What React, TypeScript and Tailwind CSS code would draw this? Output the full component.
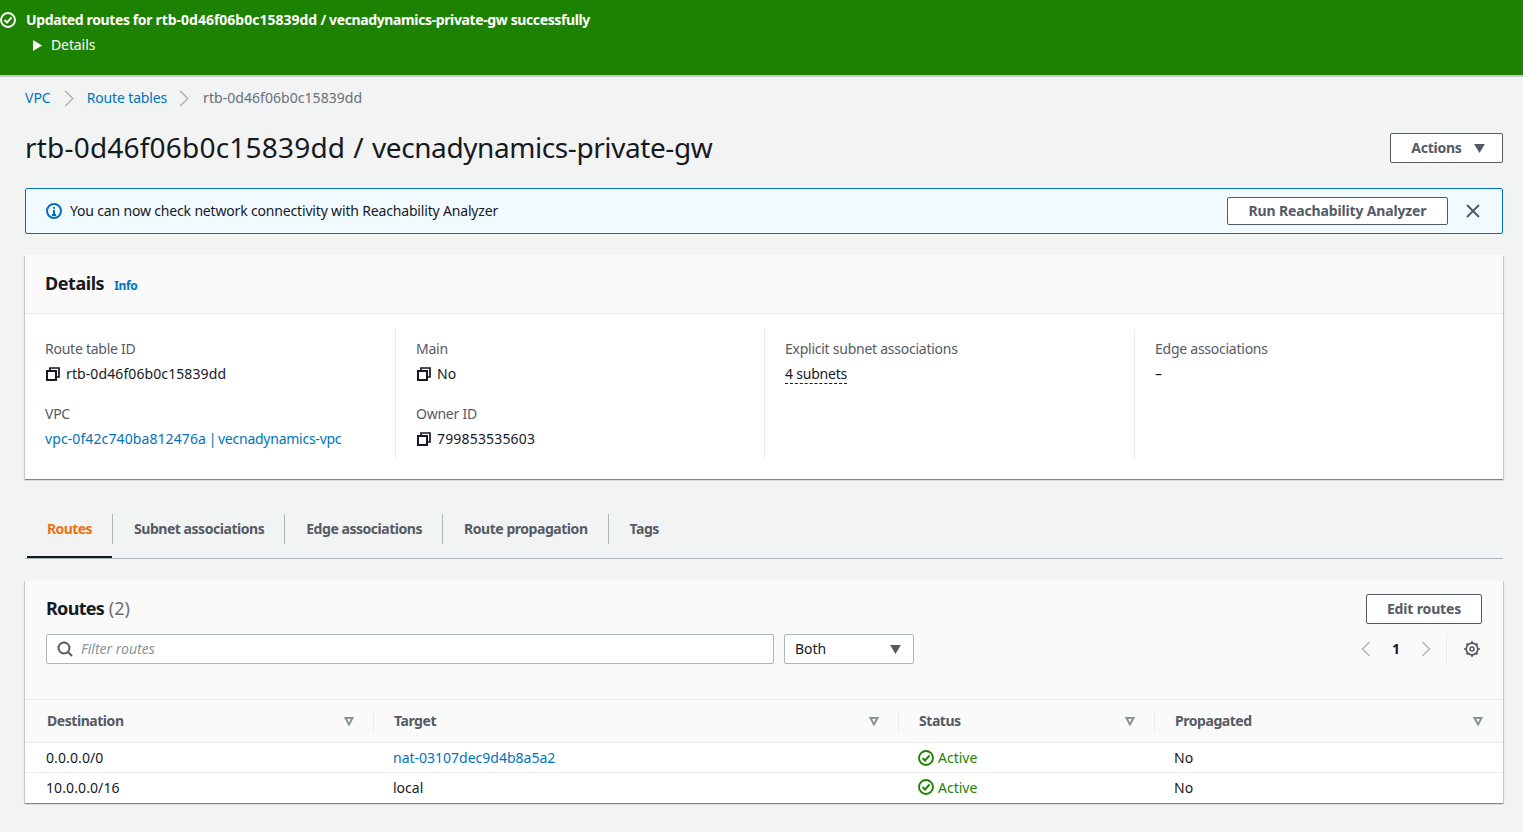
// --- Small drawn icons ---
const CheckCircle = ({ className }: { className: string }) => (
  <svg viewBox="0 0 16 16" className={className} fill="none" stroke="currentColor" strokeWidth="1.9">
    <circle cx="8" cy="8" r="7" />
    <path d="M4.5 8 7 10.5 11.5 5.5" />
  </svg>
);

const CopyIcon = () => (
  <svg viewBox="0 0 14 14" className="ml-[1px] h-[14px] w-[14px] shrink-0" fill="none" stroke="#16191f" strokeWidth="2">
    <rect x="1" y="4" width="9" height="9" />
    <path d="M4 3V1h9v9h-2" strokeWidth="1.7" />
  </svg>
);

const Caret = ({ className }: { className: string }) => (
  <svg viewBox="0 0 12 10" className={className} fill="currentColor">
    <path d="M0 0h12L6 10z" />
  </svg>
);

const SortCaret = () => (
  <svg viewBox="0 0 10 9" className="h-[9px] w-[10px] text-[#879596]" fill="none" stroke="currentColor" strokeWidth="2">
    <path d="M1.5 1h7L5 7.5z" />
  </svg>
);

const Chevron = ({ left, className }: { left?: boolean; className: string }) => (
  <svg viewBox="0 0 10 18" className={className} fill="none" stroke="currentColor" strokeWidth="1.6">
    <path d={left ? "M9 1 1 9l8 8" : "M1 1l8 8-8 8"} />
  </svg>
);

const Gear = () => (
  <svg viewBox="0 0 16 16" className="h-[16px] w-[16px] text-[#545b64]" fill="none" stroke="currentColor" strokeWidth="1.7">
    <circle cx="8" cy="8" r="5.8" />
    <circle cx="8" cy="8" r="2" strokeWidth="1.6" />
    <path d="M8 0.3v1.7M8 14v1.7M0.3 8H2M14 8h1.7M2.6 2.6l1.1 1.1M12.3 12.3l1.1 1.1M2.6 13.4l1.1-1.1M12.3 3.7l1.1-1.1" strokeWidth="2" />
  </svg>
);

const Button = ({ children, className }: { children: React.ReactNode; className: string }) => (
  <button
    type="button"
    className={`flex items-center justify-center rounded-[2px] border border-[#545b64] bg-white pb-[2px] text-[14px] font-bold tracking-[-0.15px] text-[#545b64] ${className}`}
  >
    {children}
  </button>
);

const Field = ({ label, children }: { label: string; children: React.ReactNode }) => (
  <div className="flex h-[45px] flex-col justify-between">
    <div className="leading-[20px] tracking-[-0.25px] text-[#545b64]">{label}</div>
    <div className="flex items-center gap-[6px] leading-[20px]">{children}</div>
  </div>
);

const tabs = ["Subnet associations", "Edge associations", "Route propagation", "Tags"];

const columns = [
  { name: "Destination", width: "w-[349px] pl-[22px] pr-[19px]" },
  { name: "Target", width: "w-[525px] pl-[20px] pr-[19px]" },
  { name: "Status", width: "w-[256px] pl-[20px] pr-[19px]" },
  { name: "Propagated", width: "flex-1 pl-[20px] pr-[20px]" },
];

const routes = [
  { destination: "0.0.0.0/0", target: "nat-03107dec9d4b8a5a2", link: true },
  { destination: "10.0.0.0/16", target: "local", link: false },
];

const App = () => {
  return (
    <div className="min-h-[832px] bg-[#f2f3f3] font-['Noto_Sans',sans-serif] text-[14px] text-[#16191f]">
      {/* flash banner */}
      <div className="h-[77px] border-b-2 border-[#c4c8c8] bg-[#1d8102] text-white">
        <div className="flex h-[40px] items-center">
          <CheckCircle className="h-[16px] w-[16px]" />
          <span className="ml-[10px] pb-[2px] font-bold whitespace-pre">
            <span className="tracking-[-0.38px]">Updated routes for </span>
            <span>rtb-0d46f06b0c15839dd</span>
            <span className="tracking-[-0.38px]"> / vecnadynamics-private-gw successfully</span>
          </span>
        </div>
        <div className="flex h-[10px] items-center">
          <svg viewBox="0 0 9 11" className="ml-[33px] h-[11px] w-[9px]" fill="currentColor">
            <path d="M0 0l9 5.5L0 11z" />
          </svg>
          <span className="ml-[9px] pb-[2px] tracking-[-0.1px]">Details</span>
        </div>
      </div>

      <div className="pr-[20px] pl-[25px]">
        {/* breadcrumb */}
        <div className="flex h-[42px] items-center">
          <span className="pb-[2px] text-[#0073bb]">VPC</span>
          <Chevron className="mx-[13px] h-[17px] w-[10px] text-[#aab7b8]" />
          <span className="pb-[2px] tracking-[-0.15px] text-[#0073bb]">Route tables</span>
          <Chevron className="mr-[14px] ml-[12px] h-[17px] w-[10px] text-[#aab7b8]" />
          <span className="pb-[2px] tracking-[0.05px] text-[#687078]">rtb-0d46f06b0c15839dd</span>
        </div>

        {/* title row */}
        <div className="mt-[14px] flex h-[30px] items-center justify-between">
          <h1 className="pb-[3px] text-[28px] leading-[36px] font-normal whitespace-pre">
            <span className="tracking-[0.2px]">rtb-0d46f06b0c15839dd</span>
            <span className="tracking-[0.6px]"> / </span>
            <span className="tracking-[-0.42px]">vecnadynamics-private-gw</span>
          </h1>
          <Button className="h-[30px] w-[113px] gap-[12px] pl-[3px] tracking-[-0.25px]">
            Actions
            <Caret className="mt-[2px] h-[9px] w-[11px]" />
          </Button>
        </div>

        {/* info alert */}
        <div className="mt-[25px] flex h-[46px] items-center rounded-[2px] border border-[#0073bb] bg-[#f1faff] pr-[19px] pl-[20px]">
          <svg viewBox="0 0 16 16" className="h-[16px] w-[16px] text-[#0073bb]" fill="none" stroke="currentColor" strokeWidth="2">
            <circle cx="8" cy="8" r="7" />
            <path d="M8 7v5M6 12h4M8 4v1.8" />
          </svg>
          <span className="ml-[8px] flex-1 pb-[2px] tracking-[-0.17px]">You can now check network connectivity with Reachability Analyzer</span>
          <Button className="h-[28px] w-[221px]">Run Reachability Analyzer</Button>
          <svg viewBox="0 0 14 14" className="mr-[3px] ml-[18px] h-[14px] w-[14px] text-[#545b64]" fill="none" stroke="currentColor" strokeWidth="2">
            <path d="M1 1l12 12M13 1 1 13" />
          </svg>
        </div>

        {/* details card */}
        <div className="mt-[21px] h-[224px] bg-white shadow-[0_1px_1px_0_rgba(0,28,36,0.3),1px_1px_1px_0_rgba(0,28,36,0.15),-1px_1px_1px_0_rgba(0,28,36,0.15)]">
          <div className="flex h-[59px] items-center border-b border-[#eaeded] bg-[#fafafa] pl-[20px]">
            <span className="pb-[2px] text-[18px] font-bold tracking-[-0.45px]">Details</span>
            <span className="mt-[3px] ml-[10px] text-[12px] font-bold tracking-[-0.3px] text-[#0073bb]">Info</span>
          </div>
          <div className="flex pt-[15px]">
            <div className="flex h-[130px] w-[371px] flex-col justify-between border-r border-[#eaeded] py-[10px] pl-[20px]">
              <Field label="Route table ID">
                <CopyIcon />
                <span className="tracking-[0.1px]">rtb-0d46f06b0c15839dd</span>
              </Field>
              <Field label="VPC">
                <span className="whitespace-pre text-[#0073bb]">
                  <span className="tracking-[0.1px]">vpc-0f42c740ba812476a</span>
                  <span className="tracking-[-1px]"> | </span>
                  <span className="tracking-[-0.25px]">vecnadynamics-vpc</span>
                </span>
              </Field>
            </div>
            <div className="flex h-[130px] w-[369px] flex-col justify-between border-r border-[#eaeded] py-[10px] pl-[20px]">
              <Field label="Main">
                <CopyIcon />
                No
              </Field>
              <Field label="Owner ID">
                <CopyIcon />
                <span className="tracking-[0.17px]">799853535603</span>
              </Field>
            </div>
            <div className="h-[130px] w-[370px] border-r border-[#eaeded] py-[10px] pl-[20px]">
              <Field label="Explicit subnet associations">
                <span className="border-b border-dashed border-[#16191f] leading-[19px] tracking-[-0.2px]">4 subnets</span>
              </Field>
            </div>
            <div className="h-[130px] flex-1 py-[10px] pl-[20px]">
              <Field label="Edge associations">–</Field>
            </div>
          </div>
        </div>

        {/* tabs */}
        <div className="mt-[21px] flex h-[59px] items-end border-b border-[#aab7b8] pl-[2px]">
          <div className="flex h-[58px] w-[85px] items-center border-b-2 border-[#16191f] pl-[20px] font-bold tracking-[-0.6px] text-[#ec7211]">
            Routes
          </div>
          {tabs.map((tab) => (
            <div key={tab} className="flex h-[58px] items-center">
              <div className="flex h-[30px] items-center border-l border-[#aab7b8] pr-[20px] pb-[2px] pl-[21px] font-bold tracking-[-0.46px] text-[#545b64]">
                {tab}
              </div>
            </div>
          ))}
        </div>

        {/* routes card */}
        <div className="mt-[21px] h-[223px] bg-[#fafafa] shadow-[0_1px_1px_0_rgba(0,28,36,0.3),1px_1px_1px_0_rgba(0,28,36,0.15),-1px_1px_1px_0_rgba(0,28,36,0.15)]">
          <div className="h-[120px] border-b border-[#eaeded] pt-[14px] pr-[21px] pl-[21px]">
            <div className="flex h-[30px] items-center justify-between">
              <span className="pb-[2px] text-[18px] font-bold">
                <span className="tracking-[-0.7px]">Routes</span> <span className="font-normal text-[#687078]">(2)</span>
              </span>
              <Button className="h-[30px] w-[116px]">Edit routes</Button>
            </div>
            <div className="mt-[10px] flex h-[30px] items-center">
              <div className="flex h-[30px] w-[728px] items-center rounded-[2px] border border-[#aab7b8] bg-white pl-[10px]">
                <svg viewBox="0 0 16 16" className="h-[16px] w-[16px] text-[#545b64]" fill="none" stroke="currentColor" strokeWidth="2">
                  <circle cx="7" cy="7" r="5.5" />
                  <path d="M11 11l4 4" />
                </svg>
                <span className="ml-[8px] pb-[2px] text-[#879596] italic">Filter routes</span>
              </div>
              <div className="ml-[10px] flex h-[30px] w-[130px] items-center justify-between rounded-[2px] border border-[#aab7b8] bg-white pr-[12px] pl-[10px]">
                <span className="pb-[2px]">Both</span>
                <Caret className="h-[9px] w-[11px] text-[#545b64]" />
              </div>
              <div className="ml-auto flex items-center pr-[2px]">
                <Chevron left className="h-[16px] w-[10px] text-[#aab7b8]" />
                <span className="mx-[21px] pb-[2px] font-bold">1</span>
                <Chevron className="h-[16px] w-[10px] text-[#aab7b8]" />
                <div className="mr-[17px] ml-[15px] h-[30px] border-l border-[#eaeded]" />
                <Gear />
              </div>
            </div>
          </div>

          <div className="flex h-[43px] items-center border-b border-[#eaeded]">
            {columns.map((col, i) => (
              <div key={col.name} className={`flex h-[21px] items-center justify-between font-bold text-[#545b64] ${col.width} ${i < 3 ? "border-r border-[#eaeded]" : ""}`}>
                <span className="pb-[2px] tracking-[-0.45px]">{col.name}</span>
                <SortCaret />
              </div>
            ))}
          </div>

          {routes.map((route, i) => (
            <div
              key={route.destination}
              className={`flex items-center bg-white ${i === 0 ? "h-[29px]" : "h-[31px] border-t border-[#eaeded] pb-[2px]"}`}
            >
              <div className="w-[348px] pl-[21px] tracking-[0.1px]">{route.destination}</div>
              <div className={`w-[525px] pl-[20px] ${route.link ? "text-[#0073bb]" : ""}`}>{route.target}</div>
              <div className="flex w-[256px] items-center gap-[4px] pl-[20px] text-[#1d8102]">
                <CheckCircle className="h-[16px] w-[16px]" />
                Active
              </div>
              <div className="pl-[20px]">No</div>
            </div>
          ))}
        </div>
      </div>
    </div>
  );
};

export default App;
